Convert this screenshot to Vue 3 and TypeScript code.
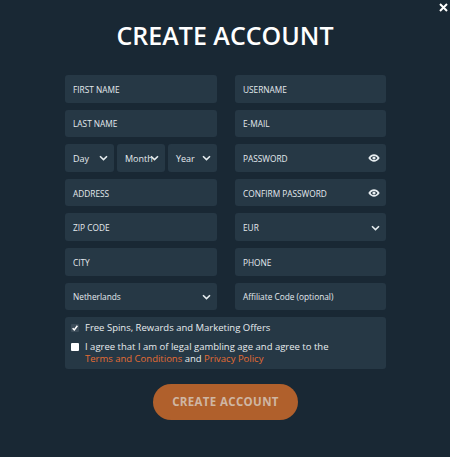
<script setup lang="ts">
const chevron = 'M1 1.2 L4.5 4.6 L8 1.2'
const eyeShape = 'M0.3 4 C2 1.3 4 0.3 6 0.3 C8 0.3 10 1.3 11.7 4 C10 6.7 8 7.7 6 7.7 C4 7.7 2 6.7 0.3 4 Z M6 1.9 C4.2 1.9 3.2 3 2.6 4 C3.2 5 4.2 6.1 6 6.1 C7.8 6.1 8.8 5 9.4 4 C8.8 3 7.8 1.9 6 1.9 Z'
const dates = ['Day', 'Month', 'Year']
</script>

<template>
  <main class="page">
    <button class="close" type="button" aria-label="Close">
      <svg width="9" height="9" viewBox="0 0 9 9"><path d="M1 1 L8 8 M8 1 L1 8" /></svg>
    </button>
    <h1 class="title">CREATE ACCOUNT</h1>
    <form class="form" @submit.prevent>
      <div class="grid">
        <div class="field">FIRST NAME</div>
        <div class="field">USERNAME</div>
        <div class="field">LAST NAME</div>
        <div class="field">E-MAIL</div>
        <div class="dates">
          <div v-for="d in dates" :key="d" class="field date">
            <span class="date-label">{{ d }}</span>
            <svg class="chev" width="9" height="6" viewBox="0 0 9 6"><path :d="chevron" /></svg>
          </div>
        </div>
        <div class="field split">
          <span>PASSWORD</span>
          <svg class="eye" width="12" height="8" viewBox="0 0 12 8"><path fill-rule="evenodd" :d="eyeShape" /><circle cx="6" cy="4" r="1.6" /></svg>
        </div>
        <div class="field">ADDRESS</div>
        <div class="field split">
          <span>CONFIRM PASSWORD</span>
          <svg class="eye" width="12" height="8" viewBox="0 0 12 8"><path fill-rule="evenodd" :d="eyeShape" /><circle cx="6" cy="4" r="1.6" /></svg>
        </div>
        <div class="field">ZIP CODE</div>
        <div class="field split">
          <span>EUR</span>
          <svg class="chev" width="9" height="6" viewBox="0 0 9 6"><path :d="chevron" /></svg>
        </div>
        <div class="field">CITY</div>
        <div class="field">PHONE</div>
        <div class="field split">
          <span>Netherlands</span>
          <svg class="chev" width="9" height="6" viewBox="0 0 9 6"><path :d="chevron" /></svg>
        </div>
        <div class="field">Affiliate Code (optional)</div>
      </div>
      <div class="terms">
        <div class="check-row">
          <span class="box">
            <svg width="8" height="8" viewBox="0 0 8 8"><path d="M1.6 4.2 L3.3 5.9 L6.4 1.8" /></svg>
          </span>
          <span>Free Spins, Rewards and Marketing Offers</span>
        </div>
        <div class="check-row">
          <span class="box white"></span>
          <span>I agree that I am of legal gambling age and agree to the<br /><a class="link">Terms and Conditions</a> and <a class="link">Privacy Policy</a></span>
        </div>
      </div>
      <button class="submit" type="submit">CREATE ACCOUNT</button>
    </form>
  </main>
</template>

<style>
html, body { margin: 0; background: #192834; }
</style>

<style scoped>
.page {
  position: relative;
  width: 450px;
  height: 457px;
  box-sizing: border-box;
  background: #192834;
  font-family: "Open Sans", "Liberation Sans", sans-serif;
  color: #e4eaee;
  overflow: hidden;
  padding-top: 17px;
}
.close {
  position: absolute;
  top: 3px;
  right: 1px;
  width: 11px;
  height: 9px;
  padding: 0;
  background: none;
  border: 0;
  display: flex;
  align-items: center;
  justify-content: center;
}
.close path { stroke: #fff; stroke-width: 2; fill: none; }
.title {
  margin: 0;
  height: 36px;
  line-height: 36px;
  text-align: center;
  font-size: 25px;
  font-weight: 600;
  color: #fff;
}
.form {
  margin: 22px 0 0 65px;
  width: 321px;
}
.grid {
  display: grid;
  grid-template-columns: 152px 151px;
  column-gap: 18px;
  row-gap: 7px;
  grid-auto-rows: 27.6px;
}
.field {
  background: #263845;
  border-radius: 3px;
  padding: 1px 6px 0 8px;
  display: flex;
  align-items: center;
  font-size: 8.3px;
  font-weight: 500;
  white-space: nowrap;
  overflow: hidden;
}
.split { justify-content: space-between; }
.dates {
  display: grid;
  grid-template-columns: 49px 48px 49px;
  column-gap: 3px;
}
.date { font-size: 9px; }
.date-label { flex: 1; min-width: 0; }
.chev { flex: none; margin-left: -4px; }
.chev path { stroke: #e6ecef; stroke-width: 1.6; fill: none; }
.eye { flex: none; }
.eye path, .eye circle { fill: #e6ecef; }
.terms {
  margin-top: 7px;
  height: 52px;
  box-sizing: border-box;
  background: #263845;
  border-radius: 3px;
  padding: 5px 6px 0;
  display: flex;
  flex-direction: column;
  gap: 7px;
  font-size: 9.5px;
  font-weight: 500;
  line-height: 12px;
  color: #e6ecef;
}
.check-row { display: flex; gap: 6px; }
.box {
  flex: none;
  width: 8px;
  height: 8px;
  margin-top: 2px;
  display: flex;
  border-radius: 1px;
  background: #3c4c59;
}
.box path { stroke: #fff; stroke-width: 1.5; fill: none; }
.box.white { background: #fff; }
.link { color: #e56c33; }
.submit {
  display: block;
  margin: 15px auto 0;
  width: 145px;
  height: 36px;
  padding: 0 0 2px;
  border: 0;
  border-radius: 18px;
  background: #b0602c;
  color: #cfb6a3;
  font-family: inherit;
  font-size: 11.5px;
  font-weight: 700;
  letter-spacing: 0.35px;
}
</style>
